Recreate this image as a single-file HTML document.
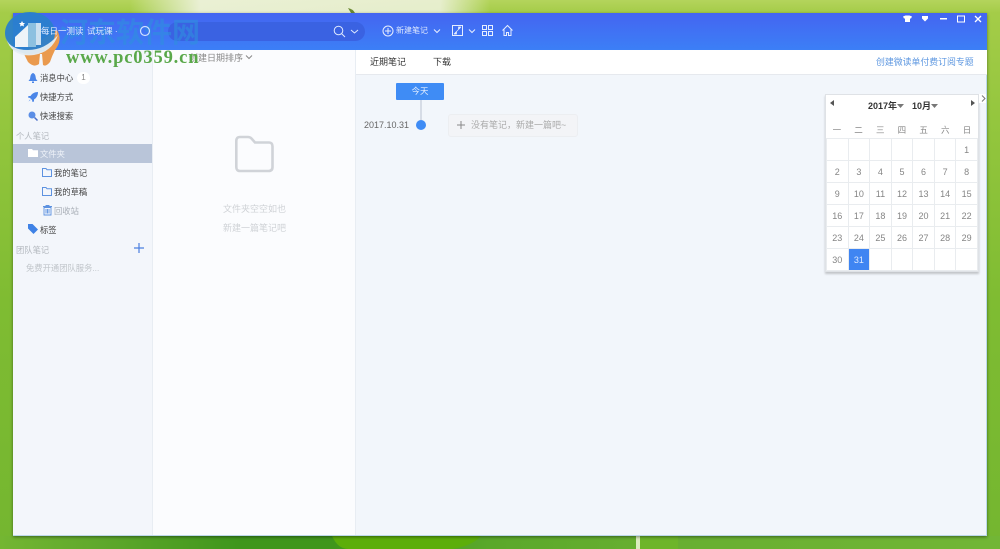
<!DOCTYPE html>
<html><head><meta charset="utf-8">
<style>
html,body{margin:0;padding:0}
body{width:1000px;height:549px;position:relative;overflow:hidden;font-family:"Liberation Sans","Noto Sans CJK SC",sans-serif;background:#6fb22f}
.a{position:absolute;white-space:nowrap}
#bg{position:absolute;left:0;top:0;width:1000px;height:549px;background:
linear-gradient(90deg,#74b632 0,#5fa82c 100px,#3f961c 240px,#3f961c 332px,#5aa82a 490px,#66ae30 630px,#72b636 1000px) 0 536px/1000px 13px no-repeat,
linear-gradient(90deg,rgba(240,243,225,0) 130px,rgba(240,243,225,.9) 200px,rgba(240,243,225,.85) 440px,rgba(240,243,225,0) 490px) 0 0/1000px 13px no-repeat,
linear-gradient(180deg,#b4d45c 0,#a4cc48 13px,#94c63e 120px,#7fbc32 300px,#74b630 549px)}
#win{position:absolute;left:13px;top:13px;width:974px;height:523px;background:#f2f6fb;box-shadow:0 1px 3px rgba(0,0,0,.45);border-right:1px solid #bcd8ea;border-bottom:1px solid #bcd8ea;box-sizing:border-box}
#hd{position:absolute;left:13px;top:13px;width:974px;height:37px;background:linear-gradient(180deg,#4465f1,#3c7ff6)}
#side{position:absolute;left:13px;top:50px;width:139px;height:485px;background:#f3f6fb;border-right:1px solid #e8edf3}
#list{position:absolute;left:153px;top:50px;width:203px;height:485px;background:#fbfcfe;border-right:1px solid #e8edf3;box-sizing:border-box}
#tabs{position:absolute;left:356px;top:50px;width:631px;height:24px;background:#fff;border-bottom:1px solid #e6e9ee}
.s{font-size:8.3px;color:#444;line-height:12px}
.g{font-size:8.3px;color:#b3b8be;line-height:12px}
.w{font-size:8px;color:#dfe9ff;line-height:12px}
table{border-collapse:collapse;position:absolute;left:826px;top:138px;background:#fff;table-layout:fixed;width:152px}
td{border:1px solid #e9ecef;height:21px;width:20.55px;padding:0;text-align:center;font-size:9px;color:#858585}
svg{position:absolute;overflow:visible}
</style></head><body>
<div id="bg"></div>
<svg style="left:0;top:536px" width="1000" height="13"><path d="M332 0Q338 13 348 13L452 13Q472 10 481 0Z" fill="#5cae0a"/><rect x="636" y="0" width="4" height="13" fill="#dcecc0"/><rect x="640" y="0" width="38" height="13" fill="#6db52a"/></svg>
<svg style="left:346px;top:6px" width="10" height="8"><path d="M2 2Q7 3 9 7L5 7Z" fill="#6c8a32"/></svg>
<div id="win"></div>
<div id="hd"></div>
<div id="side"></div>
<div id="list"></div>
<div id="tabs"></div>
<div class="a" style="left:168px;top:22px;width:197px;height:19px;border-radius:10px;background:#3a62e2"></div>

<!-- watermark logo -->
<svg style="left:0;top:0" width="70" height="70" viewBox="0 0 70 70">
<path d="M57 30Q63 40 55 50Q52 56 50 62Q46 67 43 65L42 54L40 54L39 64Q34 68 28 62L23 52Z" fill="#ea9a4e"/>
<ellipse cx="30" cy="33" rx="25" ry="21" fill="#2a80cc" opacity=".95"/>
<path d="M6 38Q10 50 28 50Q45 50 58 35Q52 52 34 55Q12 58 6 38Z" fill="#e5edf2" opacity=".95"/>
<path d="M15 47V37L28 25V47Z" fill="#eef4f8"/><path d="M28 23H36V47H28Z" fill="#8cc0e0"/>
<path d="M36 23H41V45H36Z" fill="#e8f1f6" opacity=".85"/>
<path d="M22 21l1 2h2l-1.500 1.500.5 2-2-1-2 1 .5-2L19 23h2z" fill="#fff"/>
</svg>
<div class="a" style="left:60px;top:16px;font-size:28px;line-height:34px;font-weight:bold;color:#2f8fe0;opacity:.62;letter-spacing:0">河东软件网</div>

<!-- header -->
<div class="a w" style="left:41px;top:25px;font-size:8.5px">每日一测读</div>
<div class="a w" style="left:87px;top:25px;font-size:8.5px">试玩课 ·</div>
<svg style="left:139px;top:25px" width="12" height="12" viewBox="0 0 12 12"><circle cx="6" cy="6" r="4.5" fill="none" stroke="#cfe0ff" stroke-width="1.2"/></svg>
<svg style="left:333px;top:25px" width="32" height="13" viewBox="0 0 32 13"><circle cx="5.5" cy="5.5" r="4.3" fill="none" stroke="#dfe9ff"/><path d="M8.6 8.6L12 12M18 5l3.5 3L25 5" fill="none" stroke="#dfe9ff"/></svg>
<svg style="left:382px;top:25px" width="12" height="12" viewBox="0 0 12 12"><circle cx="6" cy="6" r="5" fill="none" stroke="#e6eeff"/><path d="M3 6h6M6 3v6" stroke="#e6eeff"/></svg>
<div class="a w" style="left:396px;top:25px">新建笔记</div>
<svg style="left:433px;top:29px" width="8" height="5"><path d="M1 .5l3 3 3-3" fill="none" stroke="#e6eeff"/></svg>
<svg style="left:452px;top:25px" width="11" height="11" viewBox="0 0 11 11"><rect x=".5" y=".5" width="10" height="10" fill="none" stroke="#e6eeff"/><path d="M2 9L9 2M2 9h2.500V6.500M9 2H6.500V4.500" fill="#e6eeff" stroke="#e6eeff" stroke-width=".7"/></svg>
<svg style="left:468px;top:29px" width="8" height="5"><path d="M1 .5l3 3 3-3" fill="none" stroke="#e6eeff"/></svg>
<svg style="left:482px;top:25px" width="11" height="11" viewBox="0 0 11 11"><path d="M.5.500h4v4h-4zM6.500.500h4v4h-4zM.5 6.500h4v4h-4zM6.500 6.500h4v4h-4z" fill="none" stroke="#e6eeff"/></svg>
<svg style="left:502px;top:25px" width="11" height="11" viewBox="0 0 11 11"><path d="M.5 5.500L5.500.5l5 5M2 4.500v6h2.500V7.500h2v3H9v-6" fill="none" stroke="#e6eeff"/></svg>
<svg style="left:903px;top:15px" width="80" height="8" viewBox="0 0 80 8"><path d="M0 1.500L2.500 .5h4L9 1.500 8 3.500H7V7H2V3.500H1z" fill="#fff"/><path d="M19 1h6v2.500l-3 3-3-3z" fill="#fff"/><rect x="37" y="3" width="7" height="1.500" fill="#fff"/><rect x="54.500" y="1" width="7" height="6" fill="none" stroke="#fff"/><path d="M72 1l6 6M78 1l-6 6" stroke="#fff" stroke-width="1.300"/></svg>

<!-- sidebar -->
<svg style="left:28px;top:73px" width="10" height="10" viewBox="0 0 10 10"><path d="M5 0C2.500 1 2.500 3 2 6L.5 8h9L8 6C7.500 3 7.500 1 5 0zM4 8.500h2V10H4z" fill="#4b86e8"/></svg>
<div class="a s" style="left:40px;top:72px">消息中心</div>
<div class="a" style="left:77px;top:72px;width:13px;height:12px;border-radius:6px;background:#fff;font-size:8px;line-height:12px;text-align:center;color:#888">1</div>
<svg style="left:28px;top:92px" width="10" height="10" viewBox="0 0 10 10"><path d="M10 0C6.500 0 4 1.500 2.500 4H.5L0 5.500l2 .5 2 2 .5 2L6 9.500V7.500C8.500 6 10 3.500 10 0zM2 7.500L.5 9.500 2.500 8z" fill="#4b86e8"/></svg>
<div class="a s" style="left:40px;top:91px">快捷方式</div>
<svg style="left:28px;top:111px" width="10" height="10" viewBox="0 0 10 10"><circle cx="4" cy="4" r="3.500" fill="#5b8ee6"/><path d="M6.500 6.500L9.500 9.500" stroke="#4b6fc8" stroke-width="1.500"/></svg>
<div class="a s" style="left:40px;top:110px">快速搜索</div>
<div class="a g" style="left:16px;top:130px">个人笔记</div>
<div class="a" style="left:13px;top:144px;width:139px;height:19px;background:#b9c5d9"></div>
<svg style="left:28px;top:149px" width="10" height="8" viewBox="0 0 10 8"><path d="M0 0h4l1 1.200h5V8H0z" fill="#fff"/></svg>
<div class="a" style="left:40px;top:148px;font-size:8.3px;line-height:12px;color:#eef2f8">文件夹</div>
<svg style="left:42px;top:168px" width="10" height="9" viewBox="0 0 10 9"><path d="M.5.500h3.500l1 1.200h4.500v6.800H.5z" fill="none" stroke="#5d92e0"/></svg>
<div class="a s" style="left:54px;top:167px">我的笔记</div>
<svg style="left:42px;top:187px" width="10" height="9" viewBox="0 0 10 9"><path d="M.5.500h3.500l1 1.200h4.500v6.800H.5z" fill="none" stroke="#5d92e0"/></svg>
<div class="a s" style="left:54px;top:186px">我的草稿</div>
<svg style="left:43px;top:205px" width="9" height="10" viewBox="0 0 9 10"><path d="M0 1.500h9M3 1.500V.5h3v1M1 2.500h7V10H1zM3 4v4.500M4.500 4v4.500M6 4v4.500" fill="none" stroke="#5d92e0" stroke-width=".9"/></svg>
<div class="a g" style="left:54px;top:205px;color:#a8aeb6">回收站</div>
<svg style="left:28px;top:224px" width="10" height="10" viewBox="0 0 10 10"><path d="M0 0h4.500L10 5.500 5.500 10 0 4.500z" fill="#3f82e6"/></svg>
<div class="a s" style="left:40px;top:224px">标签</div>
<div class="a g" style="left:16px;top:244px">团队笔记</div>
<svg style="left:134px;top:243px" width="10" height="10"><path d="M0 5h10M5 0v10" stroke="#4b7fe0" stroke-width="1.200"/></svg>
<div class="a g" style="left:26px;top:262px;color:#c0c5ca">免费开通团队服务...</div>

<!-- list -->
<div class="a" style="left:189px;top:52px;font-size:9px;line-height:12px;color:#888">创建日期排序</div>
<svg style="left:245px;top:55px" width="8" height="5"><path d="M1 .5l3 3 3-3" fill="none" stroke="#888"/></svg>
<svg style="left:235px;top:135px" width="39" height="38" viewBox="0 0 39 38"><path d="M1.300 6Q1.300 2 5 2h8q2 0 3.500 1.500L20 7.500h14q3.500 0 3.500 4V32q0 4-4 4H5q-3.700 0-3.700-4z" fill="none" stroke="#d0d3d8" stroke-width="2.600"/></svg>
<div class="a" style="left:223px;top:203px;font-size:9px;line-height:12px;color:#cfd2d6">文件夹空空如也</div>
<div class="a" style="left:223px;top:222px;font-size:9px;line-height:12px;color:#cfd2d6">新建一篇笔记吧</div>

<!-- green url -->
<div class="a" style="left:66px;top:49px;font-family:'Liberation Serif',serif;font-size:18.5px;line-height:18px;font-weight:bold;color:#5aa84a;letter-spacing:.85px">www.pc0359.cn</div>

<!-- tabs -->
<div class="a" style="left:370px;top:56px;font-size:9px;line-height:12px;color:#333">近期笔记</div>
<div class="a" style="left:433px;top:56px;font-size:9px;line-height:12px;color:#333">下载</div>
<div class="a" style="left:876px;top:56px;font-size:8.9px;line-height:12px;color:#5d97e0">创建微读单付费订阅专题</div>

<!-- timeline -->
<div class="a" style="left:396px;top:83px;width:48px;height:17px;background:#3f8cf5;border-radius:1px;color:#e4efff;font-size:8.5px;line-height:17px;text-align:center">今天</div>
<div class="a" style="left:420px;top:100px;width:2px;height:20px;background:#d6dce6"></div>
<div class="a" style="left:364px;top:120px;font-size:9px;line-height:11px;color:#666">2017.10.31</div>
<div class="a" style="left:416px;top:120px;width:10px;height:10px;border-radius:50%;background:#3f8cf5"></div>
<div class="a" style="left:448px;top:114px;width:130px;height:23px;background:#f3f4f7;border:1px solid #eceef1;border-radius:3px;box-sizing:border-box"></div>
<svg style="left:457px;top:121px" width="8" height="8"><path d="M0 4h8M4 0v8" stroke="#888"/></svg>
<div class="a" style="left:471px;top:119px;font-size:9px;line-height:12px;color:#aaa">没有笔记，新建一篇吧~</div>

<!-- calendar -->
<div class="a" style="left:825px;top:94px;width:154px;height:178px;background:#fff;border:1px solid #dfe2e6;box-sizing:border-box;box-shadow:0 2px 2px rgba(0,0,0,.2)"></div>
<div class="a" style="left:979px;top:94px;width:7px;height:9px;background:#fff"></div>
<svg style="left:981px;top:95px" width="5" height="7"><path d="M1 .5l3 3-3 3" fill="none" stroke="#777"/></svg>
<svg style="left:830px;top:100px" width="145" height="7"><path d="M4 0v6L0 3zM141 0v6l4-3z" fill="#555"/></svg>
<div class="a" style="left:868px;top:100px;font-size:9px;line-height:12px;color:#333;font-weight:bold">2017年</div>
<svg style="left:897px;top:104px" width="7" height="4"><path d="M0 0h7L3.500 4z" fill="#777"/></svg>
<div class="a" style="left:912px;top:100px;font-size:9px;line-height:12px;color:#333;font-weight:bold">10月</div>
<svg style="left:931px;top:104px" width="7" height="4"><path d="M0 0h7L3.500 4z" fill="#777"/></svg>
<div class="a" style="left:826px;top:124px;width:152px;display:flex;font-size:8.5px;line-height:12px;color:#888;text-align:center"><span style="width:21.7px">一</span><span style="width:21.7px">二</span><span style="width:21.7px">三</span><span style="width:21.7px">四</span><span style="width:21.7px">五</span><span style="width:21.7px">六</span><span style="width:21.7px">日</span></div>
<table>
<tr><td></td><td></td><td></td><td></td><td></td><td></td><td>1</td></tr>
<tr><td>2</td><td>3</td><td>4</td><td>5</td><td>6</td><td>7</td><td>8</td></tr>
<tr><td>9</td><td>10</td><td>11</td><td>12</td><td>13</td><td>14</td><td>15</td></tr>
<tr><td>16</td><td>17</td><td>18</td><td>19</td><td>20</td><td>21</td><td>22</td></tr>
<tr><td>23</td><td>24</td><td>25</td><td>26</td><td>27</td><td>28</td><td>29</td></tr>
<tr><td>30</td><td style="background:#3f85f2;color:#dce9ff">31</td><td></td><td></td><td></td><td></td><td></td></tr>
</table>
</body></html>
